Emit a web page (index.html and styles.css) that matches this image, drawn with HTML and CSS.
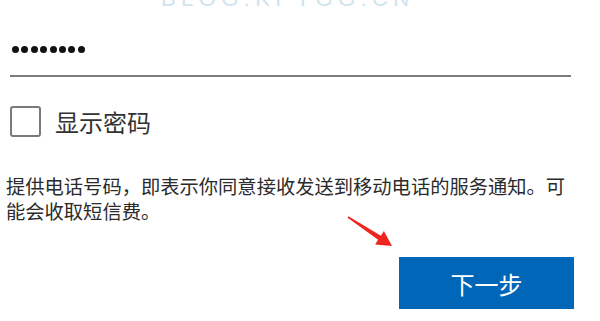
FILE: index.html
```html
<!DOCTYPE html>
<html lang="zh-CN">
<head>
<meta charset="utf-8">
<title>输入密码</title>
<link rel="stylesheet" href="styles.css">
</head>
<body>
<div class="page">
  <div class="watermark">BLOG.KPYGG.CN</div>
  <div class="field">
    <div class="dots"><span></span><span></span><span></span><span></span><span></span><span></span><span></span><span></span></div>
  </div>
  <label class="check-row">
    <span class="box"></span>
    <span class="check-label">显示密码</span>
  </label>
  <p class="note">提供电话号码，即表示你同意接收发送到移动电话的服务通知。可能会收取短信费。</p>
  <div class="actions">
    <button class="next">下一步</button>
  </div>
  <svg class="arrow" width="60" height="40" viewBox="0 0 60 40">
    <polygon points="8.4,6.3 40.9,25.7 43.9,21.05 52,36 35.1,34.4 38.1,29.8 7.6,7.7" fill="#ef2620"/>
  </svg>
</div>
</body>
</html>
```

FILE: styles.css
```css
* { box-sizing: border-box; }
html, body { margin: 0; padding: 0; background: #fff; }
body { font-family: "Noto Sans CJK SC", "Noto Sans", sans-serif; color: #333; }
.page { position: relative; width: 600px; height: 321px; overflow: hidden; }

.watermark {
  position: absolute;
  left: 161px;
  top: -12px;
  font-family: "Liberation Sans", sans-serif;
  font-size: 22px;
  line-height: 22px;
  letter-spacing: 5.4px;
  color: #cfe4ef;
}

.field {
  margin-left: 10px;
  width: 561px;
  padding: 46px 0 22px 2px;
  border-bottom: 2px solid #7d7d7d;
}
.dots { display: flex; gap: 2.4px; }
.dots span { width: 7px; height: 7px; border-radius: 50%; background: #111; }

.check-row {
  display: flex;
  align-items: center;
  gap: 14px;
  margin: 29px 0 0 10px;
}
.box {
  width: 31px; height: 31px;
  border: 2px solid #7a7a7a;
  border-radius: 3px;
  background: #fff;
}
.check-label { font-size: 24px; line-height: 31px; color: #333; }

.note {
  margin: 37px 0 0 0;
  padding-left: 6px;
  width: 576px;
  font-size: 19.3px;
  line-height: 25px;
  color: #2b2b2b;
}

.actions {
  display: flex;
  justify-content: flex-end;
  padding-right: 26px;
  margin-top: 33px;
}
.next {
  width: 175px; height: 52px;
  border: none;
  background: #0067b8;
  color: #fff;
  font-family: "Noto Sans CJK SC", sans-serif;
  font-size: 24px;
  padding: 0;
}

.arrow { position: absolute; left: 340px; top: 210px; }
```
